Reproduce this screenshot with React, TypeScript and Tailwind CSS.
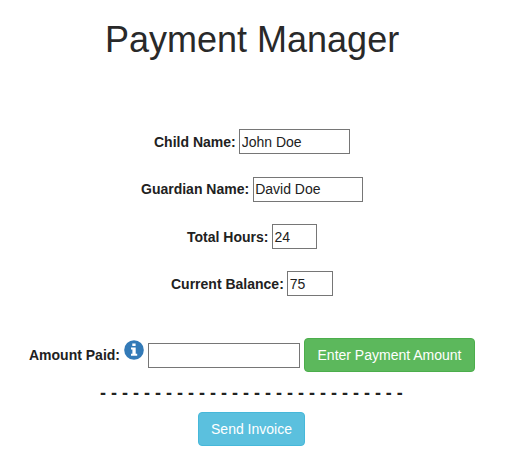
import React from "react";

type FieldProps = {
  label: string;
  value: string;
  rowClass: string;
  labelClass?: string;
  inputClass: string;
};

function Field({ label, value, rowClass, labelClass = "", inputClass }: FieldProps) {
  return (
    <div className={`flex h-[25px] items-center ${rowClass}`}>
      <label className={`font-bold whitespace-nowrap ${labelClass}`}>{label}</label>
      <input
        defaultValue={value}
        className={`h-[25px] border border-[#767676] bg-white pr-0.5 outline-none ${inputClass}`}
      />
    </div>
  );
}

export default function App() {
  return (
    <main className="h-[462px] w-[513px] overflow-hidden bg-white font-['Liberation_Sans',Arial,sans-serif] text-[14px] leading-5 text-[#212121]">
      <h1 className="ml-[105px] pt-5 text-[36px] leading-10 whitespace-nowrap text-[#292929]">Payment Manager</h1>
      <Field label="Child Name:" value="John Doe" rowClass="mt-[69px] ml-[154px]" inputClass="ml-[3px] w-[111px] pl-0.5" />
      <Field
        label="Guardian Name:"
        value="David Doe"
        rowClass="mt-[23px] ml-[141px]"
        labelClass="pb-0.5"
        inputClass="ml-1 w-[110px] pb-0.5 pl-px"
      />
      <Field label="Total Hours:" value="24" rowClass="mt-[22px] ml-[187px]" inputClass="ml-1 w-[45px] pl-px" />
      <Field label="Current Balance:" value="75" rowClass="mt-[22px] ml-[171px]" inputClass="ml-[3px] w-[46px] pl-0.5" />
      <div className="mt-[42px] ml-[29px] flex h-[34px] items-center gap-1">
        <label className="font-bold whitespace-nowrap">Amount Paid:</label>
        <svg viewBox="0 0 20 20" className="mb-[10px] h-5 w-5 shrink-0">
          <circle cx="10" cy="10" r="9.8" fill="#337ab7" />
          <path d="M8.3 3.4h3.3v2.7H8.3zM7 7.6h4.7v6.2h1.5v2H7v-2h1.4V9.5H7z" fill="#fff" />
        </svg>
        <input className="h-[25px] w-[152px] border border-[#767676] bg-white px-0.5 outline-none" />
        <button className="h-[34px] w-[171px] rounded-[4px] border border-[#4cae4c] bg-[#5cb85c] whitespace-nowrap text-white">
          Enter Payment Amount
        </button>
      </div>
      <p className="mt-[11px] ml-[100px] text-[18px] leading-5 font-bold whitespace-nowrap">
        - - - - - - - - - - - - - - - - - - - - - - - - - - - -
      </p>
      <button className="mt-[9px] ml-[198px] block h-[34px] w-[107px] rounded-[4px] border border-[#46b8da] bg-[#5bc0de] whitespace-nowrap text-white">
        Send Invoice
      </button>
    </main>
  );
}
